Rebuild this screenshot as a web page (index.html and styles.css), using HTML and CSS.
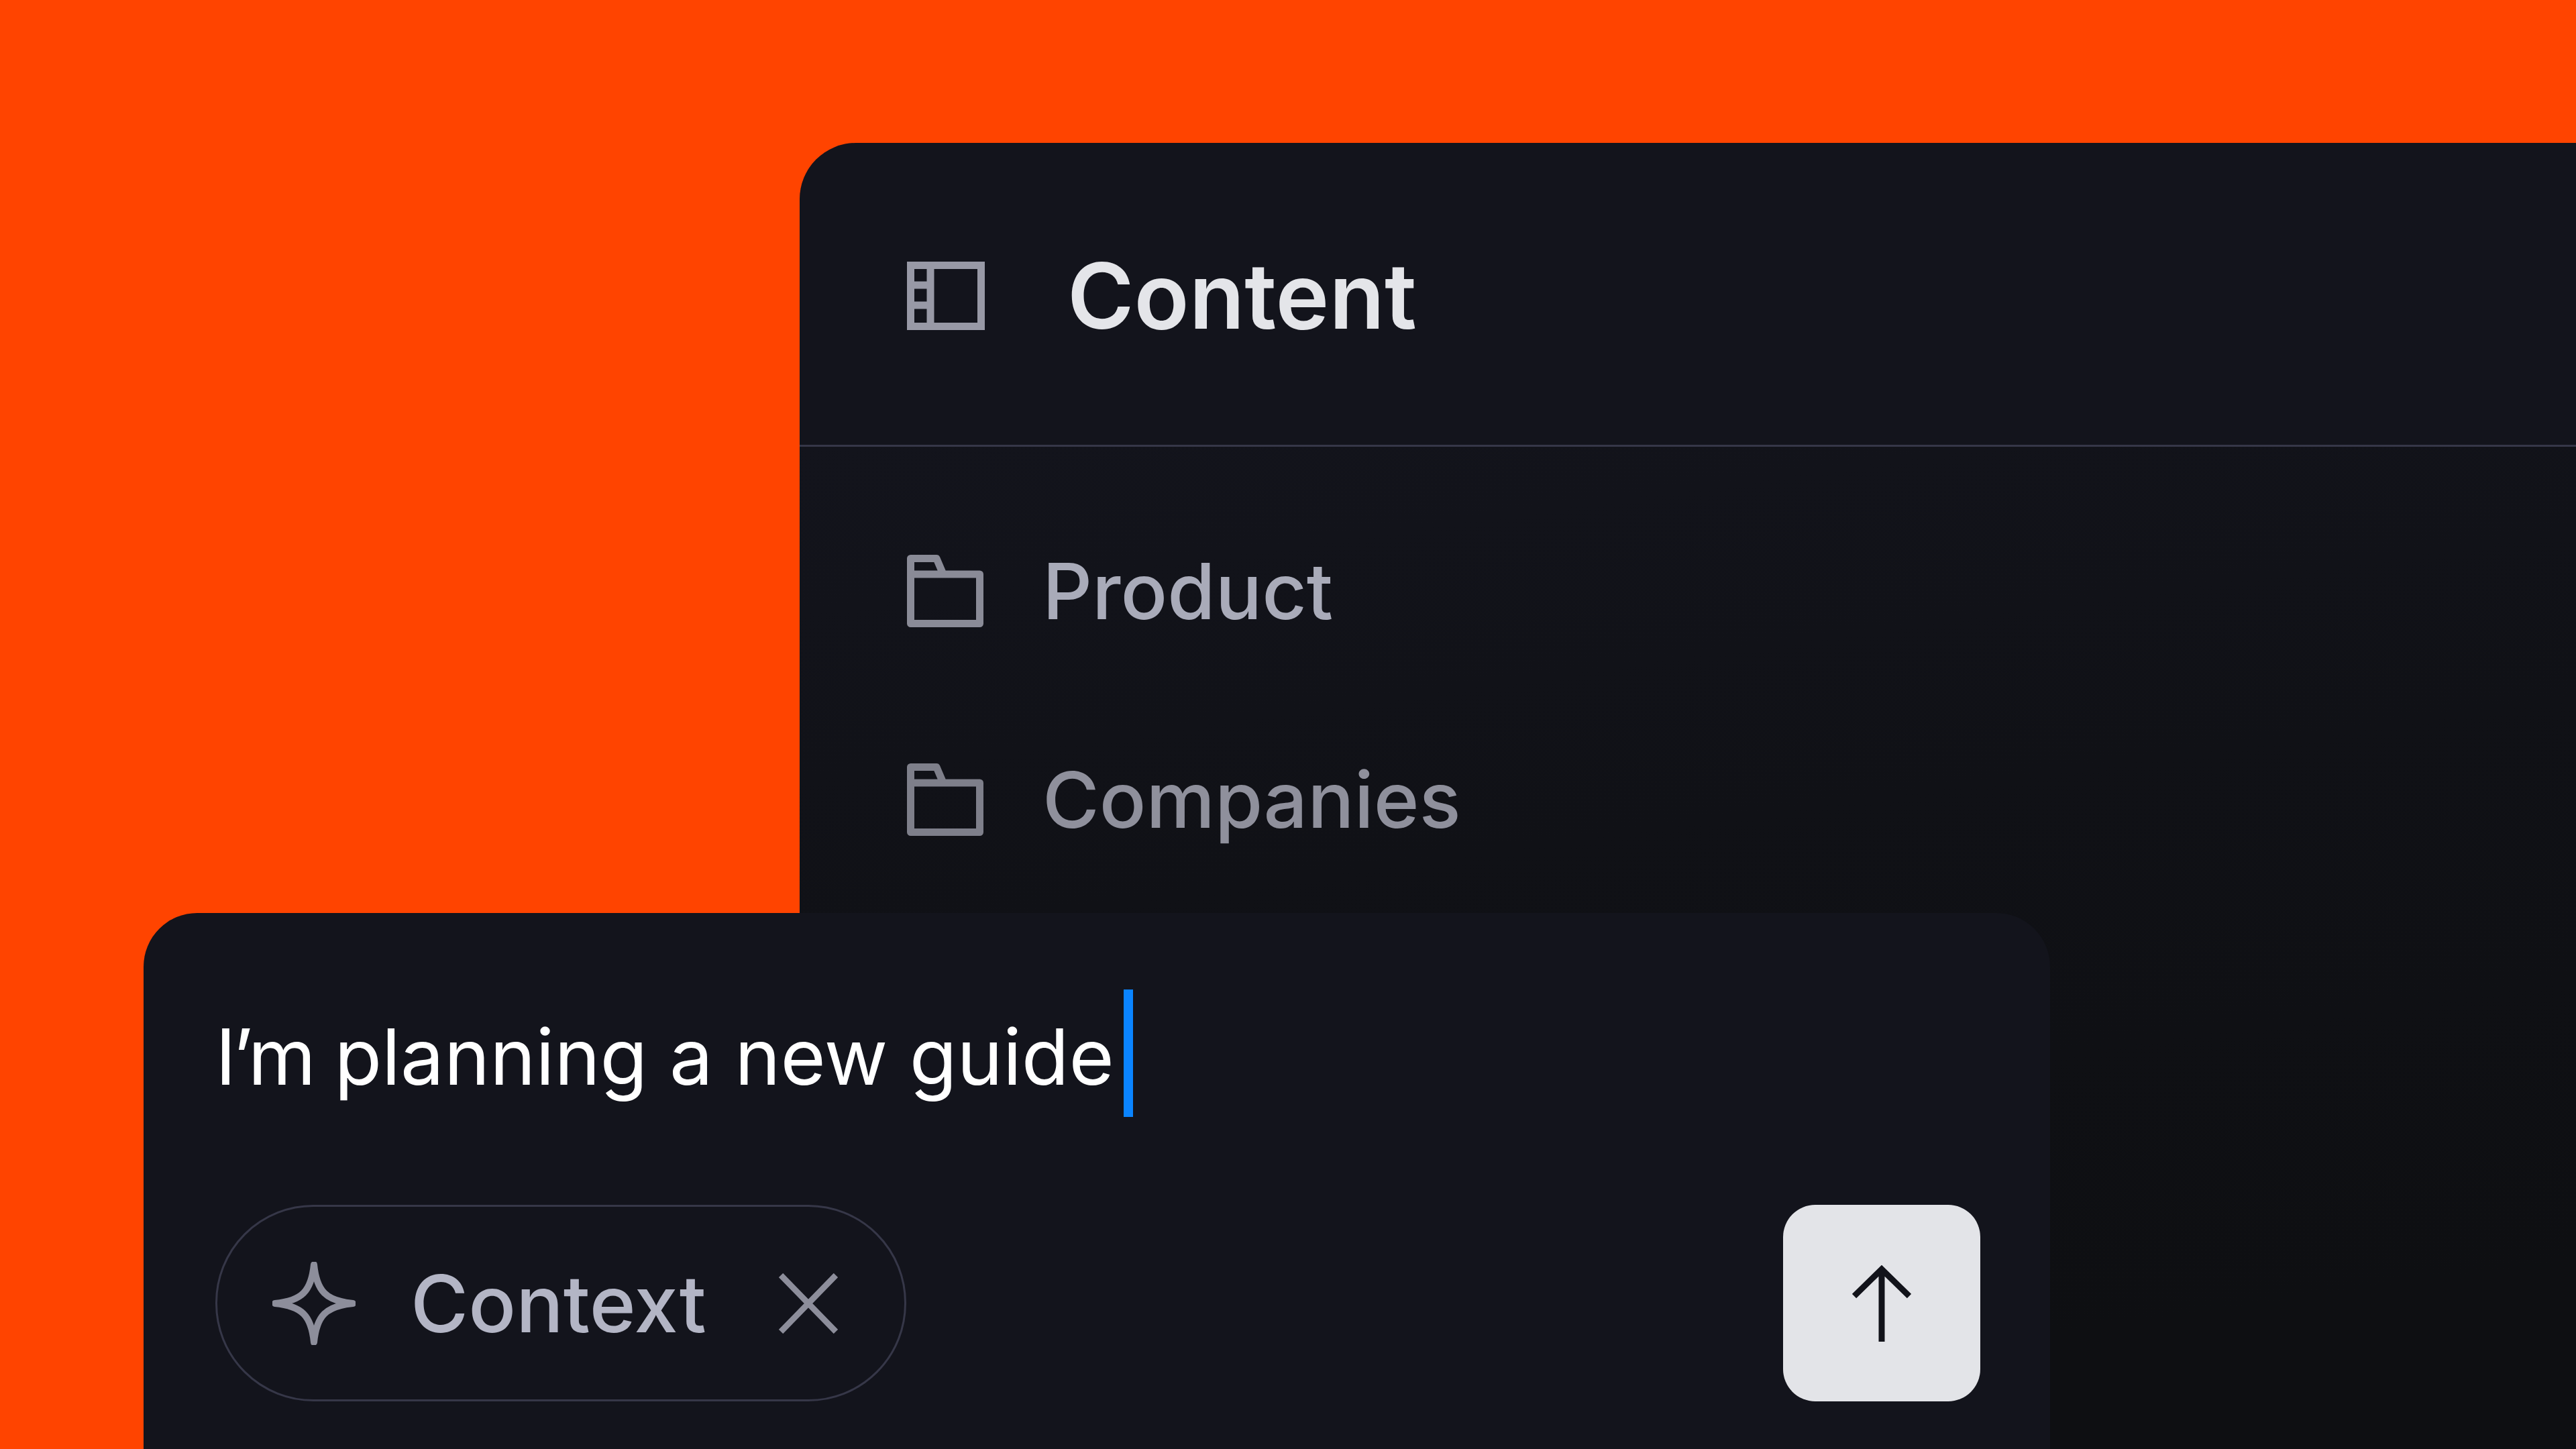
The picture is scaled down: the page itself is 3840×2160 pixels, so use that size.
FILE: index.html
```html
<!DOCTYPE html>
<html lang="en">
<head>
  <meta charset="UTF-8" />
  <title>Content</title>
  <link rel="stylesheet" href="styles.css">
</head>
<body>

  <section class="window">
    <header class="window-header">
      <svg class="icon-nav" viewBox="0 0 116 102" fill="none" stroke="currentColor" stroke-width="11">
        <rect x="5.5" y="5.5" width="105" height="91" />
        <path d="M35 5V97M5 35H35M5 65H35" />
      </svg>
      <h1>Content</h1>
    </header>
    <nav class="folders">
      <a class="folder folder-first" href="#">
        <svg class="icon-folder" viewBox="0 0 114 108" fill="none" stroke="currentColor" stroke-width="11" stroke-linejoin="round">
          <path d="M5.5 102.5V5.5H44L54 29H108.500V102.5ZM5.500 29H54" />
        </svg>
        <span>Product</span>
      </a>
      <a class="folder folder-second" href="#">
        <svg class="icon-folder" viewBox="0 0 114 108" fill="none" stroke="currentColor" stroke-width="11" stroke-linejoin="round">
          <path d="M5.5 102.5V5.5H44L54 29H108.500V102.5ZM5.500 29H54" />
        </svg>
        <span>Companies</span>
      </a>
    </nav>
  </section>

  <section class="composer">
    <div class="prompt">
      <span class="prompt-text"><span class="contraction">I’m</span> planning a new guide</span>
      <span class="caret"></span>
    </div>
    <div class="composer-footer">
      <div class="chip">
        <svg class="icon-spark" viewBox="0 0 124 124" fill="none" stroke="currentColor" stroke-width="10" stroke-linejoin="round">
          <path d="M62 4C66 44 80 58 120 62C80 66 66 80 62 120C58 80 44 66 4 62C44 58 58 44 62 4Z" />
        </svg>
        <span class="chip-label">Context</span>
        <svg class="icon-close" viewBox="0 0 88 90" fill="none" stroke="currentColor" stroke-width="9">
          <path d="M3 3L85 87M85 3L3 87" />
        </svg>
      </div>
      <button class="send">
        <svg class="icon-arrow" viewBox="0 0 88 114" fill="none" stroke="currentColor" stroke-width="9">
          <path d="M44 6V114M3 46L44 6L85 46" />
        </svg>
      </button>
    </div>
  </section>

</body>
</html>
```

FILE: styles.css
```css
:root {
  --bg-color: #ff4400;
  --panel-bg: #13141c;
  --panel-bg-end: #0e0f12;
  --line-color: #363748;
  --text-color: #e4e5e9;
  --icon-color: #8d8e9b;
  --accent-color: #0a84ff;
  --font-stack: Inter, 'Liberation Sans', sans-serif;
}

* {
  margin: 0;
  padding: 0;
  box-sizing: border-box;
}

body {
  width: 3840px;
  height: 2160px;
  position: relative;
  overflow: hidden;
  background-color: var(--bg-color);
  font-family: var(--font-stack);
}

svg {
  display: block;
  flex: none;
}

/* back window */
.window {
  position: absolute;
  left: 1192px;
  top: 213px;
  right: 0;
  bottom: 0;
  display: flex;
  flex-direction: column;
  border-top-left-radius: 84px;
  background-color: var(--panel-bg);
}

.window-header {
  height: 453px;
  display: flex;
  align-items: center;
  padding: 6px 0 0 160px;
  border-bottom: 3px solid var(--line-color);
}

.window-header h1 {
  margin-left: 123px;
  font-size: 135px;
  font-weight: 600;
  color: var(--text-color);
}

.icon-nav {
  width: 116px;
  height: 102px;
  color: #9899a6;
}

.folders {
  flex: 1;
  display: flex;
  flex-direction: column;
  gap: 203px;
  padding: 161px 0 0 160px;
  background: linear-gradient(172deg, var(--panel-bg) 0%, #101116 40%, var(--panel-bg-end) 85%);
}

.folder {
  height: 108px;
  display: flex;
  align-items: center;
  gap: 88px;
  font-size: 115.5px;
  font-weight: 500;
  text-decoration: none;
}

.folder-first {
  color: #a9abb9;
}

.folder-first .icon-folder {
  color: #8a8b97;
}

.folder-second {
  color: #8f909c;
}

.folder-second .icon-folder {
  color: #7e7f8a;
}

.icon-folder {
  width: 114px;
  height: 108px;
}

/* front card */
.composer {
  position: absolute;
  left: 214px;
  top: 1361px;
  width: 2842px;
  bottom: 0;
  border-top-left-radius: 80px;
  border-top-right-radius: 80px;
  padding: 114px 104px 0 107px;
  background-color: var(--panel-bg);
}

.prompt {
  height: 190px;
  display: flex;
  align-items: center;
  font-size: 115.5px;
  color: #fff;
}

.prompt-text {
  padding-top: 10px;
}

/* the apostrophe sits tighter in the original */
.contraction {
  letter-spacing: -5px;
}

.caret {
  width: 14px;
  height: 190px;
  margin-left: 14px;
  background-color: var(--accent-color);
}

.composer-footer {
  margin-top: 131px;
  display: flex;
  justify-content: space-between;
  align-items: center;
}

.chip {
  width: 1030px;
  height: 293px;
  display: flex;
  align-items: center;
  padding-left: 82px;
  border: 3px solid var(--line-color);
  border-radius: 146px;
  color: var(--icon-color);
}

.icon-spark {
  width: 124px;
  height: 124px;
}

.chip-label {
  margin-left: 82px;
  font-size: 117.5px;
  font-weight: 500;
  color: #b3b5c5;
}

.icon-close {
  width: 88px;
  height: 90px;
  margin-left: 108px;
}

.send {
  width: 294px;
  height: 293px;
  display: flex;
  align-items: center;
  justify-content: center;
  border: none;
  border-radius: 48px;
  background-color: #e3e4e8;
  color: #12131a;
}

.icon-arrow {
  width: 88px;
  height: 114px;
}
```
